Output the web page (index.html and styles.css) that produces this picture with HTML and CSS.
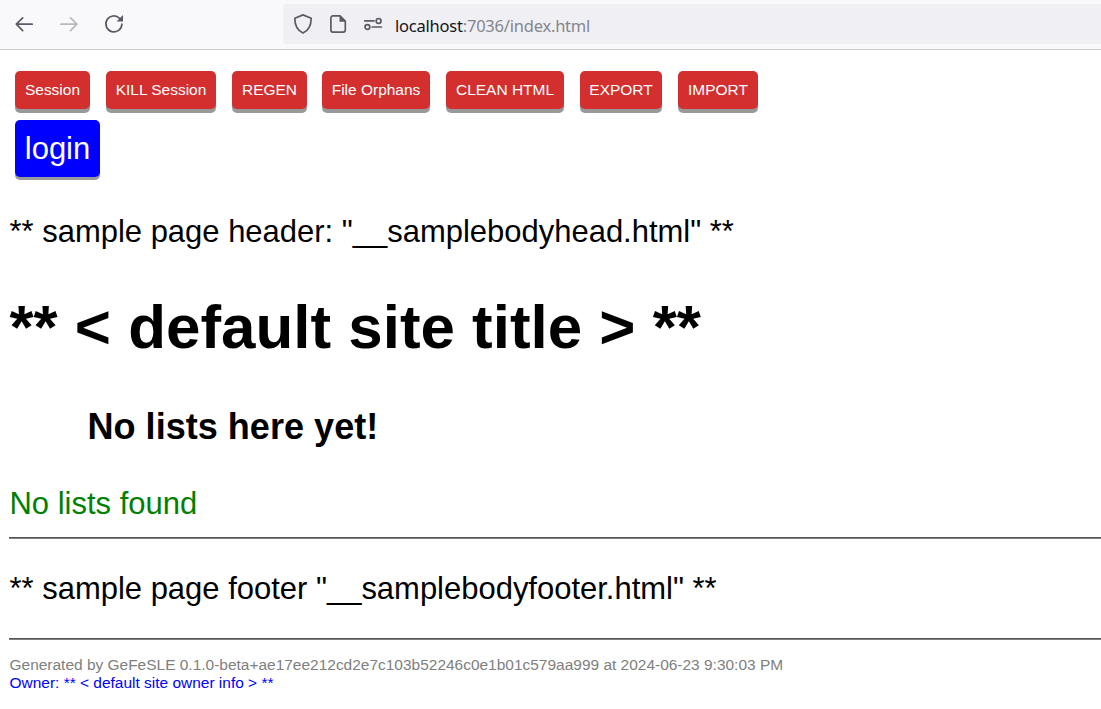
FILE: index.html
```html
<!DOCTYPE html>
<html lang="en">
<head>
<meta charset="utf-8">
<title>Index</title>
<link rel="stylesheet" href="styles.css">
</head>
<body>
<header class="browser">
  <nav class="nav">
    <svg class="icon" viewBox="0 0 20 20"><path d="M18.200 10.200H2.500M8.700 3.800L2.300 10.200l6.400 6.400"/></svg>
    <svg class="icon disabled" viewBox="0 0 20 20"><path d="M2 10.200h15.700M11.500 3.800l6.400 6.400-6.400 6.400"/></svg>
    <svg class="icon" viewBox="0 0 20 20"><path d="M17.900 10.200A8 8 0 1 1 15.600 4.300"/><path class="solid" d="M19 1v6.400h-6.400z"/></svg>
  </nav>
  <div class="address">
    <svg class="icon" viewBox="0 0 20 20"><path d="M10 .9L18.200 4.200C18.200 11.800 15.800 16.300 10 19.100 4.200 16.300 1.800 11.800 1.800 4.200z"/></svg>
    <svg class="icon" viewBox="0 0 20 20"><path d="M12 1.900H4.900a2 2 0 0 0-2 2V16.100a2 2 0 0 0 2 2h10.400a2 2 0 0 0 2-2V7.200z"/><path class="solid" d="M11.500 1.500v6.200h6.200z"/></svg>
    <svg class="icon" viewBox="0 0 20 20"><path d="M1.800 6.900h9.200M9.200 13h9.200"/><circle cx="15.600" cy="6.900" r="2.400"/><circle cx="4.400" cy="13" r="2.400"/></svg>
    <span class="url"><span class="host">localhost</span>:7036/index.html</span>
  </div>
</header>
<main class="page">
  <div class="actions">
    <button class="btn w75">Session</button>
    <button class="btn w110">KILL Session</button>
    <button class="btn w75">REGEN</button>
    <button class="btn w108">File Orphans</button>
    <button class="btn w118">CLEAN HTML</button>
    <button class="btn w82">EXPORT</button>
    <button class="btn w80">IMPORT</button>
  </div>
  <button class="login">login</button>
  <p class="sample-head">** sample page header: "__samplebodyhead.html" **</p>
  <h1 class="title">** &lt; default site title &gt; **</h1>
  <h3 class="empty">No lists here yet!</h3>
  <p class="found">No lists found</p>
  <div class="rule"></div>
  <p class="sample-foot">** sample page footer "__samplebodyfooter.html" **</p>
  <div class="rule"></div>
  <footer class="meta">
    <div>Generated by GeFeSLE 0.1.0-beta+ae17ee212cd2e7c103b52246c0e1b01c579aa999 at 2024-06-23 9:30:03 PM</div>
    <div class="owner">Owner: ** &lt; default site owner info &gt; **</div>
  </footer>
</main>
</body>
</html>
```
FILE: styles.css
```css
* { box-sizing: border-box; }
body {
  margin: 0;
  background: #fff;
  color: #000;
  font: 30.97px/36px "Liberation Sans", Arial, sans-serif;
  overflow: hidden;
}
.browser {
  display: flex;
  height: 50px;
  padding: 4px 0 5px 14px;
  background: #f9f9fb;
  border-bottom: 1px solid #ccc;
}
.nav { display: flex; align-items: center; gap: 25px; width: 269px; }
.icon {
  width: 20px;
  height: 20px;
  flex: none;
  fill: none;
  stroke: #5b5b66;
  stroke-width: 1.7;
  stroke-linecap: round;
  stroke-linejoin: round;
}
.icon .solid { fill: #5b5b66; stroke: none; }
.disabled { opacity: .4; }
.address {
  display: flex;
  flex: 1;
  align-items: center;
  gap: 15px;
  padding-left: 10px;
  background: #f0f0f4;
  border-radius: 4px 0 0 4px;
}
.url {
  margin: 3px 0 0 -3px;
  font: 16.5px/22px "Noto Sans", sans-serif;
  letter-spacing: -.22px;
  color: #85858c;
  white-space: nowrap;
}
.host { color: #15141a; }
.page { padding: 21px 0 0 9px; }
.actions { display: flex; gap: 16px; padding-left: 6px; }
.btn, .login {
  display: block;
  padding: 0;
  border: 0;
  border-radius: 5px;
  color: #fff;
  font-family: inherit;
  white-space: nowrap;
}
.btn {
  height: 38px;
  background: #d32f2f;
  box-shadow: 0 4px #999;
  font-size: 15.48px;
}
.w75 { width: 75px; }
.w80 { width: 80px; }
.w82 { width: 82px; }
.w108 { width: 108px; margin-left: -1px; }
.w110 { width: 110px; }
.w118 { width: 118px; }
.login {
  width: 85px;
  height: 57px;
  margin: 11px 0 0 6px;
  background: #00f;
  box-shadow: 0 3px #999;
  font-size: 31px;
}
p, h1, h3 { margin: 0; padding-left: .5px; white-space: nowrap; }
.sample-head { margin-top: 37px; }
.title { margin-top: 42px; font-size: 61.9px; line-height: 70px; }
.empty { margin: 45px 0 0 78px; font-size: 36.1px; line-height: 40px; }
.found { margin: 39px 0 15px; color: #008000; }
.rule { height: 2px; background: #808080; border-top: 1px solid #555; }
.sample-foot { margin: 32px 0 31px; }
.meta {
  padding: 16px 0 0 .5px;
  color: #808080;
  font-size: 15.48px;
  line-height: 18px;
  white-space: nowrap;
}
.owner { color: #00f; }
```
